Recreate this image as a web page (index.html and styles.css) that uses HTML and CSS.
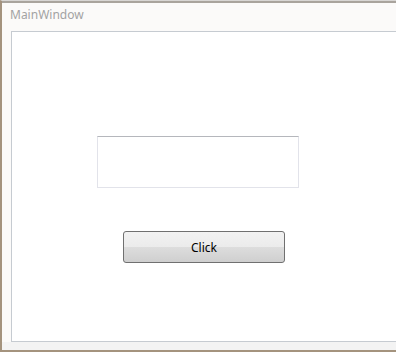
FILE: index.html
```html
<!DOCTYPE html>
<html lang="en">
<head>
    <meta charset="UTF-8">
    <meta name="viewport" content="width=device-width, initial-scale=1.0">
    <title>MainWindow</title>
    <link rel="stylesheet" href="styles.css">
</head>
<body>
    <div class="window">
        <div class="title-bar">MainWindow</div>
        <div class="client">
            <div class="text-box"></div>
            <button class="btn">Click</button>
        </div>
        <div class="bottom-strip"></div>
    </div>
</body>
</html>
```

FILE: styles.css
```css
body {
    margin: 0;
    font-family: "Noto Sans", "Open Sans", sans-serif;
    background: #faf9f8;
}

.window {
    height: 352px;
    box-sizing: border-box;
    display: flex;
    flex-direction: column;
    border-left: 2px solid #a4937e;
    border-top: 1px solid #d8d6d4;
    background: #fbfaf9;
    position: relative;
}

.window::before {
    content: "";
    position: absolute;
    top: 0;
    left: 0;
    right: 0;
    height: 2px;
    background: #a9a49d;
}

.title-bar {
    height: 30px;
    box-sizing: border-box;
    padding: 5px 0 0 8px;
    font-size: 12px;
    color: #a3a3a3;
}

.client {
    flex: 1;
    margin-left: 9px;
    border: 1px solid #c6cbd1;
    border-right: none;
    background: #fff;
    display: flex;
    flex-direction: column;
    align-items: flex-start;
    padding-top: 104px;
}

.text-box {
    margin-left: 85px;
    width: 202px;
    height: 52px;
    box-sizing: border-box;
    border: 1px solid #e2e3ea;
    border-top-color: #b5b7bc;
    background: #fff;
}

.btn {
    margin: 43px 0 0 111px;
    width: 162px;
    height: 32px;
    border: 1px solid #707070;
    border-radius: 3px;
    background: linear-gradient(#f2f2f2 0%, #ebebeb 50%, #dddddd 50%, #cfcfcf 100%);
    font-family: "Noto Sans", "Open Sans", sans-serif;
    font-size: 12px;
    color: #000;
    padding: 0;
}

.bottom-strip {
    height: 8px;
    background: #f3f3f3;
    border-bottom: 2px solid #a4937e;
}
```
